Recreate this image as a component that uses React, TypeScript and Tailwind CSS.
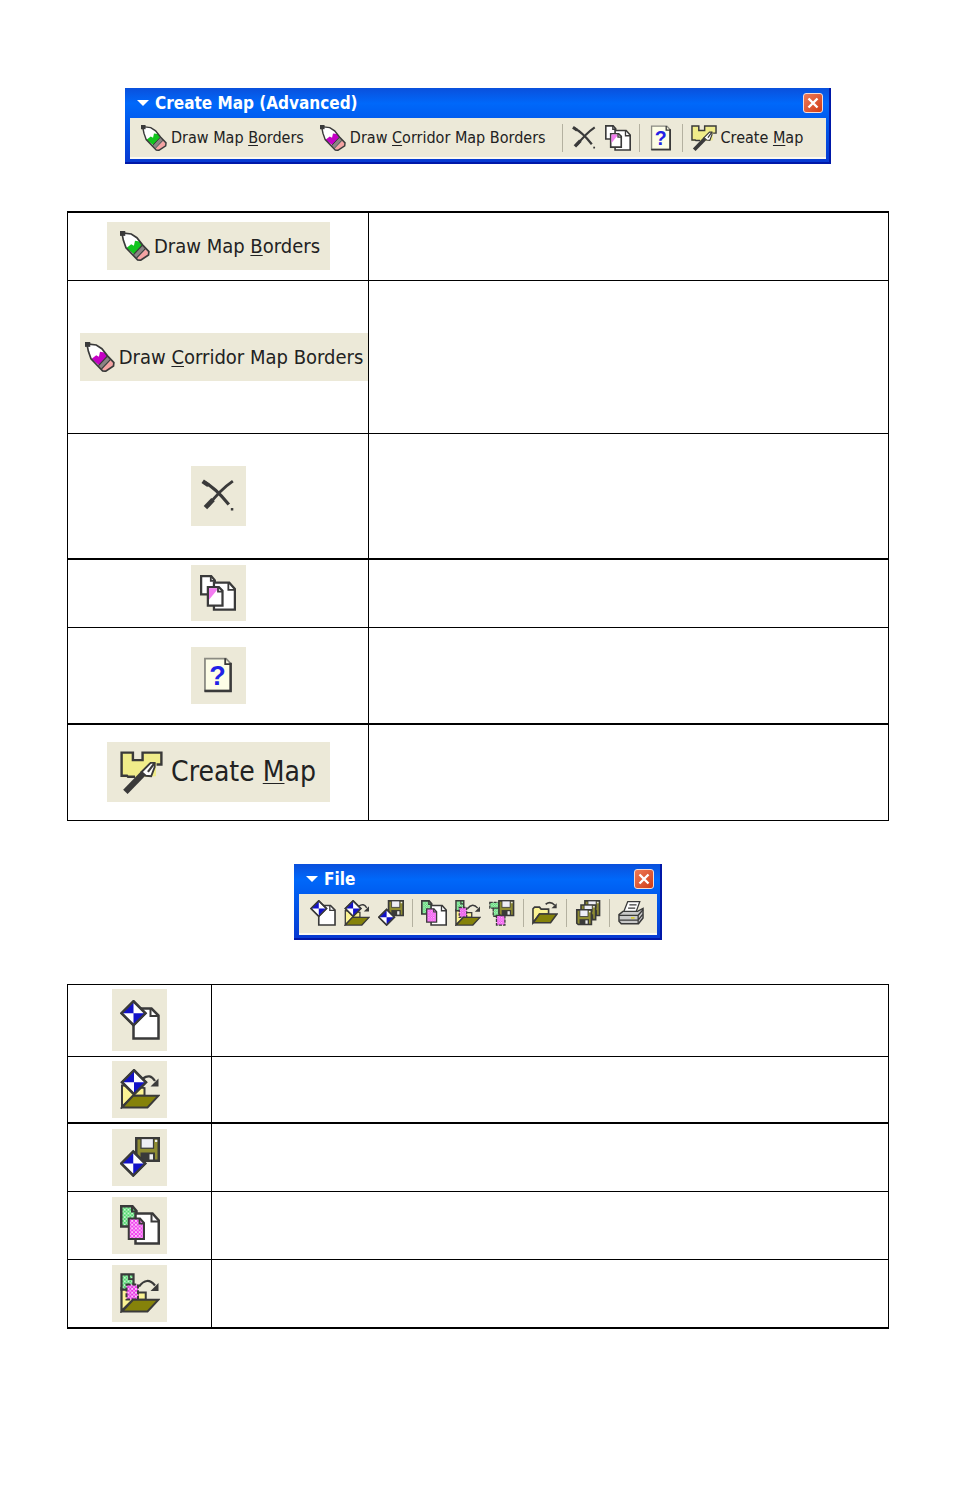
import React, { useId } from "react";

type IconProps = { className?: string };

const INK = "#3a3a3a";

function Svg({ className = "size-[26px]", children }: IconProps & { children: React.ReactNode }) {
  return (
    <svg viewBox="0 0 16 16" className={`${className} shrink-0`} fill="none" stroke={INK} strokeWidth="1" aria-hidden="true">
      {children}
    </svg>
  );
}

function Checks({ id, color }: { id: string; color: string }) {
  return (
    <pattern id={id} width="1.5" height="1.5" patternUnits="userSpaceOnUse">
      <rect width="1.5" height="1.5" fill={color} stroke="none" />
      <rect width="0.75" height="0.75" fill="#fff" fillOpacity="0.7" stroke="none" />
      <rect x="0.75" y="0.75" width="0.75" height="0.75" fill="#fff" fillOpacity="0.5" stroke="none" />
    </pattern>
  );
}

function Pencil({ className, color }: IconProps & { color: string }) {
  return (
    <Svg className={className}>
      <path d="M1 1 L6 1.6 L9 3.6 L12 7.4 L15.4 11 L15.2 12.8 L11 15.6 L9 15.4 L3.2 9 L1.8 5 Z" fill="#fff" stroke="none" />
      <path d="M3.4 9 L6 7 L7.4 7.8 L8 5.2 L10.4 5.6 L12.4 8 L8 12.8 Z" fill={color} stroke="none" />
      <path d="M7.2 12.6 L11.8 7.6 L13.8 9.4 L8.8 14.2 Z" fill="#8a8484" stroke="none" />
      <path d="M9 14.4 L13.8 9.6 L15.3 11.4 L14.8 12.8 L11 15.4 L9.8 15.2 Z" fill="#f4a3a3" stroke="none" />
      <path d="M7.2 12.6 L11.9 7.6 M8.8 14.4 L13.6 9.4" strokeWidth="0.6" />
      <path d="M1 1 L6 1.6 L9 3.6 L12 7.4 L15.4 11 L15.2 12.8 L11 15.6 L9.4 15.4 L3.2 9 L1.8 5 Z" strokeWidth="0.9" />
      <rect x="0" y="0" width="2.8" height="2.6" fill={INK} stroke="none" />
    </Svg>
  );
}
const GreenPencil = (p: IconProps) => <Pencil {...p} color="#12c41e" />;
const PurplePencil = (p: IconProps) => <Pencil {...p} color="#c400c4" />;

function DeleteIcon({ className }: IconProps) {
  return (
    <Svg className={className}>
      <path d="M2 2 Q6.5 4 12.8 11.8" strokeWidth="1.4" />
      <path d="M1.2 1.4 L3.8 3.2" strokeWidth="1.9" />
      <path d="M14.6 1.4 Q9 5.2 3.4 12.6" strokeWidth="1.3" />
      <path d="M5.8 9.6 L2.4 13.2" strokeWidth="2.1" />
      <path d="M13.7 13.9 h1.1" strokeWidth="1.1" />
    </Svg>
  );
}

function WhitePage() {
  return (
    <>
      <path d="M6.2 3.4 H13 L15.5 6.2 V15.4 H6.2 Z" fill="#fff" />
      <path d="M12.6 3.4 V6.6 H15.5" strokeWidth="0.8" />
    </>
  );
}

function CopyIcon({ className }: IconProps) {
  return (
    <Svg className={className}>
      <path d="M0.5 0.5 H5 L6.6 2.4 V8.6 H0.5 Z" fill="#fff" />
      <path d="M4.8 0.5 V2.6 H6.6" strokeWidth="0.8" />
      <WhitePage />
      <path d="M3.5 5.4 H8.4 L10 7 V13.6 H3.5 Z" fill="#fff" />
      <path d="M4 5.9 H8.2 L4 11 Z" fill="#f27cf0" stroke="none" />
      <path d="M8 5.4 V7.4 H10" strokeWidth="0.8" />
    </Svg>
  );
}

function HelpIcon({ className }: IconProps) {
  return (
    <Svg className={className}>
      <path d="M2.2 0.7 H11.6 L13.7 3 V15 H2.2 Z" fill="#fdfde6" stroke="#8b8b83" strokeWidth="0.8" />
      <path d="M11.2 0.6 V3.2 H13.9" strokeWidth="0.8" />
      <path d="M13.6 2.6 V15.1 H2" strokeWidth="1.1" />
      <text x="7.8" y="12.4" textAnchor="middle" fontSize="12" fontWeight="700" fill="#2222e6" stroke="none" className="font-['Liberation_Sans',sans-serif]">
        ?
      </text>
    </Svg>
  );
}

function MapPenIcon({ className }: IconProps) {
  return (
    <Svg className={className}>
      <path d="M0.6 0.6 H4.8 V3.4 H8.4 V0.6 H15.4 V5 H13.4 V9.4 L7 9.8 H0.6 Z" fill="#f0ec8a" stroke="none" />
      <path d="M5.6 9.6 H3 L2.6 9.2 H0.6 V0.6 H4.8 V3.4 H8.4 V0.6 H15.4 V5 H13.6" strokeWidth="0.9" />
      <path d="M8.6 8.4 L2 15.2" strokeWidth="2.3" />
      <path d="M8 7.8 L11.4 4.4 H12.9 V6 L11.6 9.4 L9.6 9.2 Z" fill="#fff" strokeWidth="0.7" />
      <path d="M12.9 4.4 L10.4 7.8" strokeWidth="0.8" />
    </Svg>
  );
}

function Diamond({ x, y }: { x: number; y: number }) {
  return (
    <g transform={`translate(${x} ${y})`}>
      <path d="M0 -4.8 L4.8 0 L0 4.8 L-4.8 0 Z" fill="#fff" />
      <path d="M0 -4.4 V0 H-4.4 Z M0 4.4 V0 H4.4 Z" fill="#1212c8" stroke="none" />
      <path d="M0 -4.8 L4.8 0 L0 4.8 L-4.8 0 Z" strokeWidth="0.8" />
    </g>
  );
}

function Floppy({ x, y }: { x: number; y: number }) {
  return (
    <g transform={`translate(${x} ${y})`}>
      <path d="M0.5 0.5 H9.5 V9.5 H1.4 L0.5 8.6 Z" fill="#8f8c32" />
      <rect x="2.4" y="0.6" width="5" height="3.9" fill="#eeeef6" stroke={INK} strokeWidth="0.5" />
      <rect x="2.2" y="6.2" width="5.8" height="3.2" fill={INK} stroke="none" />
      <rect x="5.8" y="6.9" width="1.4" height="2.1" fill="#eee" stroke="none" />
      <rect x="8" y="1.1" width="0.9" height="0.9" fill="#eee" stroke="none" />
    </g>
  );
}

function RedoArrow() {
  return (
    <>
      <path d="M9.2 3.8 Q12 1.6 14 4.8" strokeWidth="0.9" />
      <path d="M15.4 3.8 V7 H12.2 Z" fill={INK} stroke="none" />
    </>
  );
}

function FolderFlap() {
  return <path d="M0.8 15.4 L5.2 10.7 H15.4 L11 15.4 Z" fill="#85820a" strokeWidth="0.8" />;
}

function NewWaypointIcon({ className }: IconProps) {
  return (
    <Svg className={className}>
      <path d="M5.4 3.4 H12.6 L15.4 6.2 V15.4 H5.4 Z" fill="#fff" />
      <path d="M12.2 3.4 V6.4 H15.4" strokeWidth="0.8" />
      <Diamond x={5.4} y={5.3} />
    </Svg>
  );
}

function OpenWaypointIcon({ className }: IconProps) {
  return (
    <Svg className={className}>
      <path d="M0.8 15.2 V6.6 H3 L9.8 7.6 V10.7 H5.2 Z" fill="#fbf394" strokeWidth="0.8" />
      <Diamond x={5.6} y={5.3} />
      <FolderFlap />
      <RedoArrow />
    </Svg>
  );
}

function SaveWaypointIcon({ className }: IconProps) {
  return (
    <Svg className={className}>
      <Floppy x={6} y={0} />
      <Diamond x={5.3} y={10.6} />
    </Svg>
  );
}

function CopyMapsIcon({ className }: IconProps) {
  const id = useId();
  return (
    <Svg className={className}>
      <defs>
        <Checks id={`${id}g`} color="#4fd86c" />
        <Checks id={`${id}p`} color="#f040ee" />
      </defs>
      <path d="M0.5 0.5 H5 L6.6 2.4 V8.6 H0.5 Z" fill={`url(#${id}g)`} />
      <WhitePage />
      <path d="M3.5 5.4 H8 L9.6 7.2 V13.6 H3.5 Z" fill={`url(#${id}p)`} strokeWidth="0.8" />
      <path d="M7.8 5.4 V7.4 H9.6" strokeWidth="0.7" />
      <path d="M4.8 0.5 V2.6 H6.6" strokeWidth="0.8" />
    </Svg>
  );
}

function OpenMapsIcon({ className }: IconProps) {
  const id = useId();
  return (
    <Svg className={className}>
      <defs>
        <Checks id={`${id}g`} color="#4fd86c" />
        <Checks id={`${id}p`} color="#e834e6" />
      </defs>
      <path d="M0.6 15.2 V6 H5.2 V10.7 Z" fill="#fbf394" strokeWidth="0.9" />
      <path d="M0.6 0.5 H5.4 V6.6 H0.6 Z" fill={`url(#${id}g)`} strokeWidth="0.9" />
      <path d="M3.6 0.5 V2.4 H5.4" strokeWidth="0.7" />
      <path d="M7 7.8 H10.3 V10.7 H7 Z" fill="#fbf394" strokeWidth="0.8" />
      <path d="M2.6 4.6 H7.2 V10.6 H2.6 Z" fill={`url(#${id}p)`} strokeWidth="0.8" strokeDasharray="1.6 0.7" />
      <FolderFlap />
      <path d="M7.6 5.4 Q10.8 1.2 14 5" strokeWidth="0.9" />
      <path d="M15.4 4 V7.2 H12.2 Z" fill={INK} stroke="none" />
    </Svg>
  );
}

function SaveMapsIcon({ className }: IconProps) {
  const id = useId();
  return (
    <Svg className={className}>
      <defs>
        <Checks id={`${id}g`} color="#4fd86c" />
        <Checks id={`${id}p`} color="#f040ee" />
      </defs>
      <path d="M0.5 1.4 H6 V5 H0.5 Z M2.6 5 H7 V10 H2.6 Z" fill={`url(#${id}g)`} strokeDasharray="1.8 0.6" strokeWidth="0.8" />
      <path d="M4.6 9.4 H9.8 V15.4 H4.6 Z" fill={`url(#${id}p)`} strokeWidth="0.8" strokeDasharray="2 0.6" />
      <Floppy x={5.6} y={0} />
    </Svg>
  );
}

function OpenFolderIcon({ className }: IconProps) {
  return (
    <Svg className={className}>
      <path d="M0.6 14 V5.4 L1.6 4.4 H4.6 L5.6 5.6 H10.2 V8.6 H4.6 Z" fill="#fbf394" />
      <path d="M0.8 14 L4.6 8.6 H15.4 L11.4 14 Z" fill="#85820a" />
      <path d="M8.4 2.6 Q11.4 0.4 14 3.2" strokeWidth="1" />
      <path d="M15.2 2 V5 H12 Z" fill={INK} stroke="none" />
    </Svg>
  );
}

function SaveAllIcon({ className }: IconProps) {
  return (
    <Svg className={className}>
      <Floppy x={5.6} y={0} />
      <Floppy x={3.2} y={2.6} />
      <Floppy x={0.6} y={5.6} />
    </Svg>
  );
}

function PrinterIcon({ className }: IconProps) {
  return (
    <Svg className={className}>
      <path d="M3.4 7.6 L6 1 H13.4 L11 7.6 Z" fill="#fff" strokeWidth="0.8" />
      <path d="M7 3 H11.4 M6.2 5 H10.6" strokeWidth="0.7" />
      <path d="M0.6 9 L3 7 H12 L15.4 5.2 V11 L12.6 14.6 H2 L0.6 13 Z" fill="#c9c9c9" strokeWidth="0.9" />
      <path d="M0.6 9.4 H12.4 L15.4 6 M12.4 9.4 V14.4 M0.8 12.4 H12.4 L15.2 8.8" strokeWidth="0.8" />
      <path d="M8 11 H10.2" stroke="#d8cb33" strokeWidth="1" />
    </Svg>
  );
}

function Key({ children }: { children: string }) {
  return <span className="underline decoration-1 underline-offset-2">{children}</span>;
}

type ToolProps = { label: string; icon: React.ReactNode };
function Tool({ label, icon }: ToolProps) {
  return (
    <button type="button" aria-label={label} className="flex items-center px-1">
      {icon}
    </button>
  );
}

function TextTool({ icon, children }: { icon: React.ReactNode; children: React.ReactNode }) {
  return (
    <button type="button" className="flex items-center gap-1 px-1 text-[16px] whitespace-nowrap">
      {icon}
      <span>{children}</span>
    </button>
  );
}

function Separator() {
  return <div className="mx-1 h-7 w-px bg-[#b4b1a0]" />;
}

function ToolWindow({ title, className, children }: { title: string; className: string; children: React.ReactNode }) {
  return (
    <section
      className={`mx-auto flex flex-col bg-linear-to-b from-[#0a50dc] via-[#0068fa] via-20% to-[#0838d0] px-[5px] pb-[5px] shadow-[inset_-2px_-2px_0_#0018a8] ${className}`}
    >
      <header className="flex h-[30px] items-center pl-[7px]">
        <svg viewBox="0 0 12 6" className="h-[6px] w-3" aria-hidden="true">
          <path d="M0 0 H12 L6 6 Z" fill="#fff" />
        </svg>
        <h2 className="ml-[6px] flex-1 text-[17px] leading-6 font-bold text-white">{title}</h2>
        <button
          type="button"
          aria-label="Close"
          className="mr-[3px] flex size-5 items-center justify-center rounded-[3px] border border-[#f6dcd4] bg-linear-to-br from-[#ee7a56] to-[#cf3a12]"
        >
          <svg viewBox="0 0 12 12" className="size-3" aria-hidden="true">
            <path d="M1.5 1.5 L10.5 10.5 M10.5 1.5 L1.5 10.5" stroke="#fff" strokeWidth="2.4" />
          </svg>
        </button>
      </header>
      <div className="flex h-[41px] items-center border-b-2 border-[#fbfaf2] bg-[#ece9d8] px-[7px]">{children}</div>
    </section>
  );
}

const tile = "flex items-center justify-center bg-[#ece9d8] ";

function Row({ height, label, button, divider = "border-t" }: { height: string; label: string; button: React.ReactNode; divider?: string }) {
  return (
    <tr className={`${height} ${divider} border-black`}>
      <th scope="row" aria-label={label} className="border-r border-black p-0 align-middle font-normal">
        {button}
      </th>
      <td />
    </tr>
  );
}

function IconTile({ label, height, icon }: { label: string; height: string; icon: React.ReactNode }) {
  return (
    <button type="button" aria-label={label} className={`${tile} mx-auto w-[55px] ${height}`}>
      {icon}
    </button>
  );
}

export default function App() {
  return (
    <main className="bg-white pt-[88px] pr-[65px] pb-[157px] pl-[67px] font-['DejaVu_Sans_Condensed','DejaVu_Sans',sans-serif] text-[#222222]">
      <ToolWindow title="Create Map (Advanced)" className="w-fit min-w-[706px]">
        <div className="flex flex-1 items-center">
          <div className="flex items-center gap-2">
            <TextTool icon={<GreenPencil />}>
              Draw Map <Key>B</Key>orders
            </TextTool>
            <TextTool icon={<PurplePencil />}>
              Draw <Key>C</Key>orridor Map Borders
            </TextTool>
          </div>
          <div className="ml-2 flex items-center">
            <Separator />
            <Tool label="Delete" icon={<DeleteIcon />} />
            <Tool label="Copy" icon={<CopyIcon />} />
            <Separator />
            <Tool label="Properties" icon={<HelpIcon />} />
            <Separator />
            <TextTool icon={<MapPenIcon />}>
              Create <Key>M</Key>ap
            </TextTool>
          </div>
        </div>
      </ToolWindow>

      <table className="mt-[47px] w-full table-fixed border-collapse border border-t-2 border-black">
        <colgroup>
          <col className="w-[301px]" />
          <col />
        </colgroup>
        <tbody>
          <Row
            height="h-[68px]"
            label="Draw Map Borders"
            divider="border-t-2"
            button={
              <button type="button" className={`${tile} mx-auto h-12 w-[223px] gap-1 pl-1 text-[20px] whitespace-nowrap`}>
                <GreenPencil className="size-[30px]" />
                <span>
                  Draw Map <Key>B</Key>orders
                </span>
              </button>
            }
          />
          <Row
            height="h-[153px]"
            label="Draw Corridor Map Borders"
            button={
              <button type="button" className={`${tile} ml-auto h-12 w-[288px] gap-1 text-[20px] whitespace-nowrap`}>
                <PurplePencil className="size-[30px]" />
                <span>
                  Draw <Key>C</Key>orridor Map Borders
                </span>
              </button>
            }
          />
          <Row height="h-[126px]" label="Delete" button={<IconTile label="Delete" height="h-[60px]" icon={<DeleteIcon className="size-9" />} />} />
          <Row height="h-[68px]" divider="border-t-2" label="Copy" button={<IconTile label="Copy" height="h-14" icon={<CopyIcon className="size-9" />} />} />
          <Row height="h-[97px]" label="Properties" button={<IconTile label="Properties" height="h-[57px]" icon={<HelpIcon className="size-9" />} />} />
          <Row
            height="h-[96px]"
            label="Create Map"
            divider="border-t-2"
            button={
              <button type="button" className={`${tile} mx-auto h-[60px] w-[223px] gap-2 text-[28px] whitespace-nowrap`}>
                <MapPenIcon className="size-[43px]" />
                <span>
                  Create <Key>M</Key>ap
                </span>
              </button>
            }
          />
        </tbody>
      </table>

      <ToolWindow title="File" className="mt-[43px] w-fit min-w-[368px]">
        <Tool label="New waypoint file" icon={<NewWaypointIcon />} />
        <Tool label="Open waypoint file" icon={<OpenWaypointIcon />} />
        <Tool label="Save waypoint file" icon={<SaveWaypointIcon />} />
        <Separator />
        <Tool label="New map set" icon={<CopyMapsIcon />} />
        <Tool label="Open map set" icon={<OpenMapsIcon />} />
        <Tool label="Save map set" icon={<SaveMapsIcon />} />
        <Separator />
        <Tool label="Open" icon={<OpenFolderIcon />} />
        <Separator />
        <Tool label="Save all" icon={<SaveAllIcon />} />
        <Separator />
        <Tool label="Print" icon={<PrinterIcon />} />
      </ToolWindow>

      <table className="mt-11 w-full table-fixed border-collapse border border-b-2 border-black">
        <colgroup>
          <col className="w-36" />
          <col />
        </colgroup>
        <tbody>
          <Row height="h-[72px]" label="New waypoint file" button={<IconTile label="New waypoint file" height="h-[62px]" icon={<NewWaypointIcon className="size-10" />} />} />
          <Row height="h-[67px]" label="Open waypoint file" button={<IconTile label="Open waypoint file" height="h-[57px]" icon={<OpenWaypointIcon className="size-10" />} />} />
          <Row height="h-[68px]" divider="border-t-2" label="Save waypoint file" button={<IconTile label="Save waypoint file" height="h-[57px]" icon={<SaveWaypointIcon className="size-10" />} />} />
          <Row height="h-[68px]" label="New map set" button={<IconTile label="New map set" height="h-[57px]" icon={<CopyMapsIcon className="size-10" />} />} />
          <Row height="h-[69px]" label="Open map set" button={<IconTile label="Open map set" height="h-[57px]" icon={<OpenMapsIcon className="size-10" />} />} />
        </tbody>
      </table>
    </main>
  );
}
